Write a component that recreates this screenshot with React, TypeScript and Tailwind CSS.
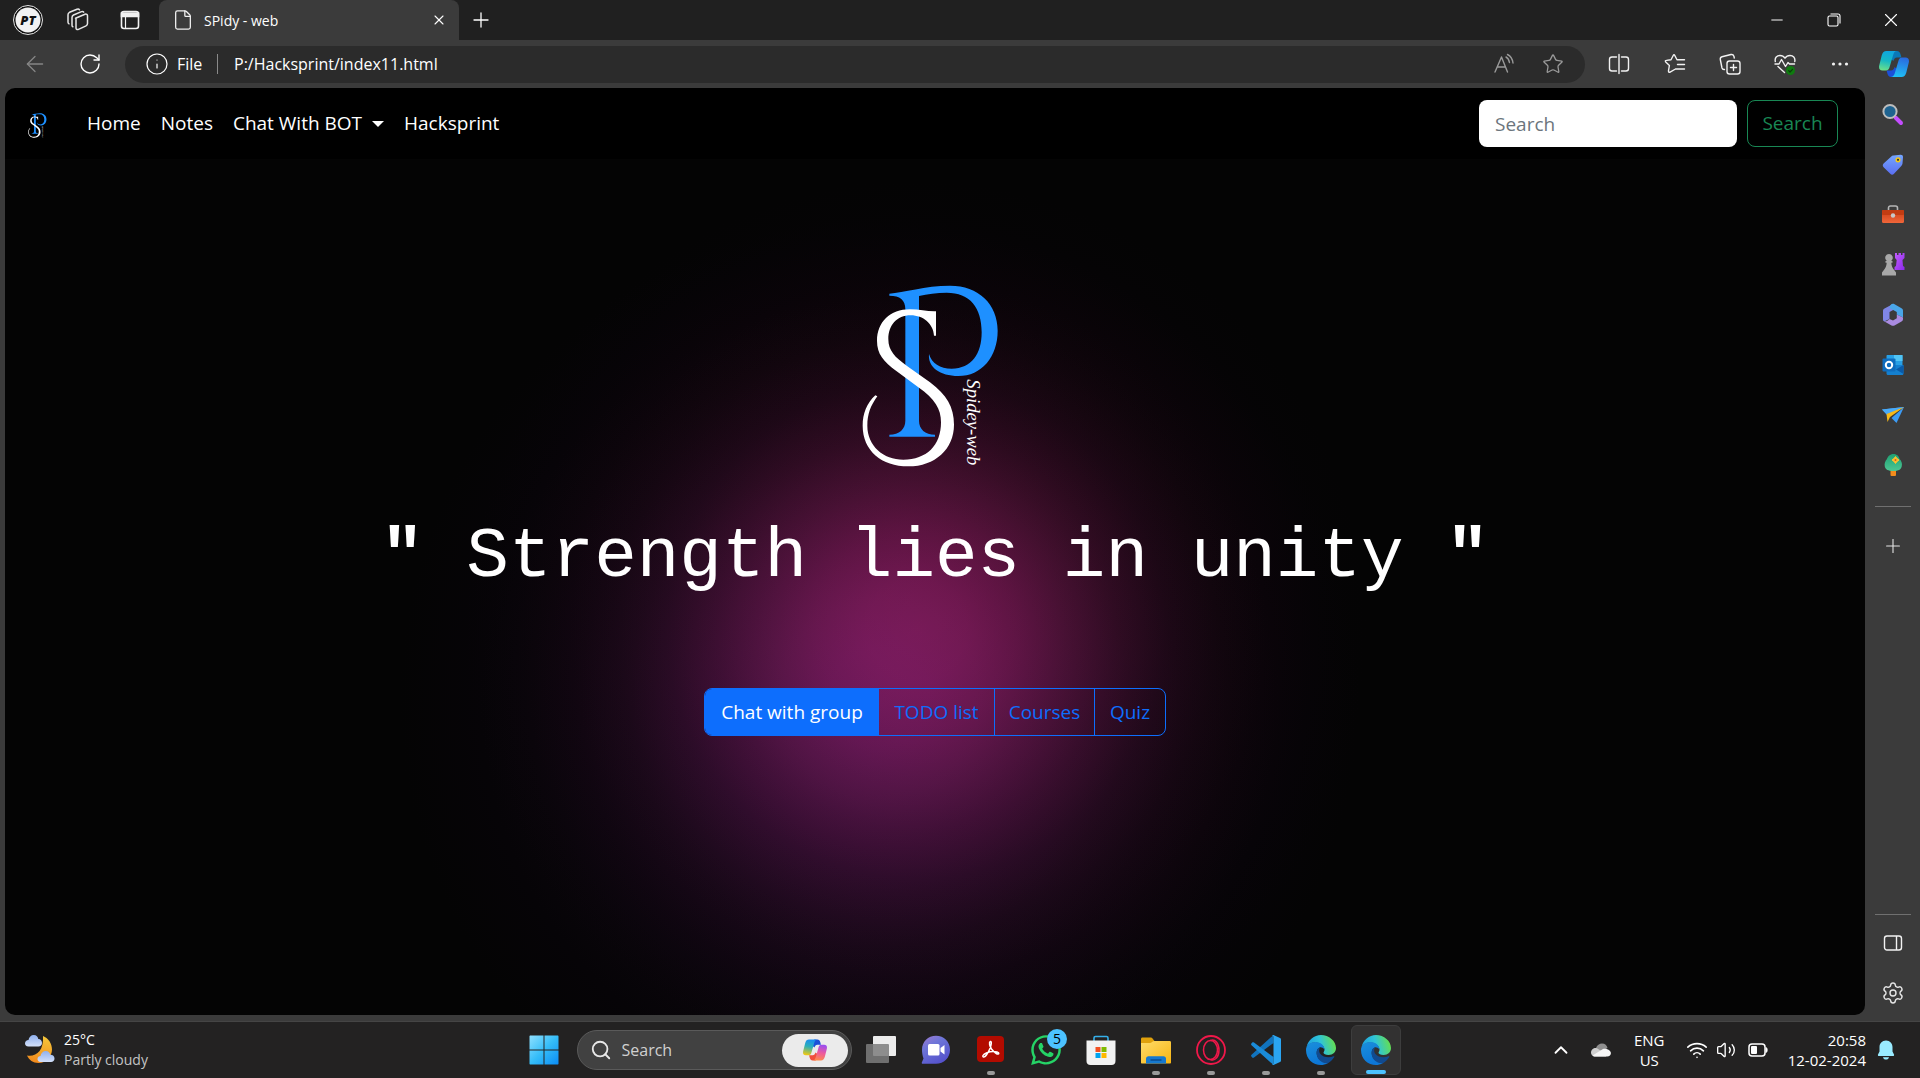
import React from "react";
import {
  ArrowLeft,
  ChevronUp,
  File,
  Info,
  Minus,
  Plus,
  RotateCw,
  Search,
  Settings,
  Star,
  Volume2,
  Wifi,
  X,
} from "lucide-react";
import { FaWhatsapp } from "react-icons/fa";

type IconButtonProps = { label: string; className: string; children: React.ReactNode };

function IconButton({ label, className, children }: IconButtonProps) {
  return (
    <button type="button" aria-label={label} className={`flex shrink-0 items-center justify-center ${className}`}>
      {children}
    </button>
  );
}

/* ---------- Logos and drawings ---------- */

function SpidyLogo({ className }: { className: string }) {
  return (
    <svg viewBox="60 40 450 555" className={className} role="img" aria-label="Spidey-web logo">
      <path
        fill="#1e90ff"
        d="M148 69C190 66 255 45 330 45C415 45 473 100 473 180C473 258 425 316 355 316C300 316 263 290 267 250C275 278 300 294 335 294C395 294 425 250 425 185C425 110 390 66 320 66C290 66 262 70 237 76L237 450C237 475 255 492 285 492L285 498L148 498L148 492C178 492 196 475 196 450L196 115C196 88 180 75 148 75Z"
      />
      <path
        fill="#fff"
        d="M288 122L288 195L282 195C280 160 250 134 212 134C170 134 145 165 145 205C145 240 165 260 200 285L270 335C320 372 342 410 342 462C342 535 285 587 205 587C125 587 68 540 68 465C68 430 80 398 106 374L112 377C92 405 82 430 82 465C82 525 130 567 190 567C260 567 303 525 303 455C303 415 285 385 235 350L170 302C130 272 111 250 111 210C111 155 150 116 210 116C240 116 262 123 288 122Z"
      />
      <text
        transform="translate(382 326) rotate(90)"
        fill="#fff"
        fontFamily="'Liberation Serif', serif"
        fontStyle="italic"
        fontSize="56"
      >
        Spidey-web
      </text>
    </svg>
  );
}

function SharedGradients() {
  return (
    <svg width="0" height="0" className="absolute" aria-hidden="true">
      <defs>
        <linearGradient id="edgeTop" x1="0" y1="0.6" x2="1" y2="0.4">
          <stop offset="0" stopColor="#1b9de2" />
          <stop offset="0.5" stopColor="#2fc4d8" />
          <stop offset="1" stopColor="#67e04a" />
        </linearGradient>
        <linearGradient id="edgeLeft" x1="0" y1="0" x2="0.4" y2="1">
          <stop offset="0" stopColor="#1a8fdc" />
          <stop offset="1" stopColor="#0d76d6" />
        </linearGradient>
        <linearGradient id="copLeft" x1="0.5" y1="0" x2="0.3" y2="1">
          <stop offset="0" stopColor="#0fa5e0" />
          <stop offset="0.5" stopColor="#16b8c4" />
          <stop offset="1" stopColor="#6be08a" />
        </linearGradient>
        <linearGradient id="copRight" x1="0.6" y1="0" x2="0.4" y2="1">
          <stop offset="0" stopColor="#2a6ae0" />
          <stop offset="1" stopColor="#1fc0f5" />
        </linearGradient>
        <linearGradient id="cop2Left" x1="0.5" y1="0" x2="0.3" y2="1">
          <stop offset="0" stopColor="#1a8cf0" />
          <stop offset="0.45" stopColor="#2bb0b8" />
          <stop offset="1" stopColor="#f2c811" />
        </linearGradient>
        <linearGradient id="cop2Right" x1="0.6" y1="0" x2="0.4" y2="1">
          <stop offset="0" stopColor="#9a4df0" />
          <stop offset="0.5" stopColor="#ec5a9e" />
          <stop offset="1" stopColor="#ff8a4a" />
        </linearGradient>
        <linearGradient id="winGrad" x1="0" y1="0" x2="1" y2="1">
          <stop offset="0" stopColor="#8fe0ff" />
          <stop offset="0.5" stopColor="#35bdf8" />
          <stop offset="1" stopColor="#0a8cf5" />
        </linearGradient>
        <linearGradient id="chatGrad" x1="0" y1="0" x2="0.6" y2="1">
          <stop offset="0" stopColor="#a07ad0" />
          <stop offset="0.4" stopColor="#6d75d8" />
          <stop offset="1" stopColor="#5552cc" />
        </linearGradient>
        <linearGradient id="folderGrad" x1="0" y1="0" x2="1" y2="1">
          <stop offset="0" stopColor="#ffdc6a" />
          <stop offset="1" stopColor="#f7b512" />
        </linearGradient>
        <linearGradient id="moonGrad" x1="0.6" y1="0" x2="0.4" y2="1">
          <stop offset="0" stopColor="#f5c63a" />
          <stop offset="1" stopColor="#f28a1c" />
        </linearGradient>
        <linearGradient id="cloudGrad" x1="0" y1="0" x2="0" y2="1">
          <stop offset="0" stopColor="#8fb0ee" />
          <stop offset="1" stopColor="#d3e0fa" />
        </linearGradient>
        <linearGradient id="tagGrad" x1="0" y1="0" x2="0" y2="1">
          <stop offset="0" stopColor="#74a6ff" />
          <stop offset="1" stopColor="#5b6ff2" />
        </linearGradient>
        <linearGradient id="rookGrad" x1="0" y1="0" x2="1" y2="1">
          <stop offset="0" stopColor="#c45cff" />
          <stop offset="1" stopColor="#8a2ae8" />
        </linearGradient>
        <linearGradient id="boxGrad" x1="0" y1="0" x2="0" y2="1">
          <stop offset="0" stopColor="#c93c12" />
          <stop offset="1" stopColor="#f0663a" />
        </linearGradient>
        <linearGradient id="treeGrad" x1="0" y1="0" x2="0" y2="1">
          <stop offset="0" stopColor="#1fa072" />
          <stop offset="1" stopColor="#4cc794" />
        </linearGradient>
      </defs>
    </svg>
  );
}

function Copilot({ warm, className }: { warm?: boolean; className: string }) {
  return (
    <svg viewBox="0 0 30 26" className={className} aria-hidden="true">
      <path fill={warm ? "#1b4fd8" : "#0a78b8"} d="M14 0H18C20 0 21 1.4 21.6 3.4L22.4 6.5H18C16 6.5 15 8 14.4 10L12 8Z" />
      <path fill={warm ? "#f0503c" : "#1b50d8"} d="M16 26H12C10 26 9 24.6 8.4 22.6L7.6 19.5H12C14 19.5 15 18 15.6 16L18 18Z" />
      <path fill={warm ? "url(#cop2Left)" : "url(#copLeft)"} d="M7.5 0H18C15.6 0 14.7 2 14 4.400L10.600 16C10 18.300 9 19.500 7 19.500H3.500C.6 19.500-.4 17.600.2 14.500L2.700 4.500C3.600 1.400 5 0 7.500 0Z" />
      <path fill={warm ? "url(#cop2Right)" : "url(#copRight)"} d="M22.500 26H12C14.400 26 15.300 24 16 21.600L19.400 10C20 7.700 21 6.500 23 6.500H26.500C29.400 6.500 30.400 8.400 29.800 11.500L27.300 21.500C26.400 24.600 25 26 22.500 26Z" />
    </svg>
  );
}

function EdgeLogo() {
  return (
    <svg viewBox="0 0 30 30" className="size-[30px]" aria-hidden="true">
      <path fill="url(#edgeTop)" d="M.6 12C2 5 8 0 15 0C23 0 30 6 30 13C30 17 27 20 22.500 20C19.500 20 17.500 19 17.500 17.800C17.500 17 18.500 16.500 18.500 14.500C18.500 11 14 7.500 9.500 7.500C5 7.500 2 9.500.6 12Z" />
      <path fill="url(#edgeLeft)" d="M0 15C0 10.500 4 7 9.500 7C14 7 18.500 10 18.500 14.500C17 12.500 15 12 13.500 12.500C10.500 14 10 18 11.500 21.500C13 25 17 28 22 28C19.500 29.500 17 30 15 30C7 30 0 24 0 15Z" />
      <path fill="#114a8f" d="M10.800 16C9.300 24 16 28.700 22 28.200C25 26.500 27 24 28.300 22C28.600 21.400 28 21 27.400 21.300C23.500 23.200 17 22.500 14 18.500C12.800 16.800 13 14 14 12.600C12 13 11.300 14.500 10.800 16Z" />
    </svg>
  );
}

/* ---------- Browser chrome ---------- */

function TabStrip() {
  return (
    <header className="flex h-10 shrink-0 items-stretch bg-[#202020] text-white">
      <div className="flex w-[159px] shrink-0 items-center pl-3">
        <IconButton label="Profile" className="size-8">
          <svg viewBox="0 0 32 32" className="size-8">
            <circle cx="16" cy="16" r="14.500" fill="#111" stroke="#e5e5e5" strokeWidth="1" />
            <circle cx="16" cy="16" r="12.500" fill="#f2f2f2" />
            <text x="16" y="20.500" textAnchor="middle" fontFamily="'Open Sans', sans-serif" fontSize="13" fontWeight="800" fontStyle="italic" fill="#111">PT</text>
          </svg>
        </IconButton>
        <IconButton label="Workspaces" className="ml-5 size-7">
          <svg viewBox="0 0 28 28" className="size-7" fill="none" stroke="#e6e6e6" strokeWidth="1.500" strokeLinejoin="round" strokeLinecap="round">
            <path d="M11.500 12.200L21 8.200C22.500 7.800 23.500 8.500 23.500 9.800V17.500C23.500 18.600 23 19.400 22 19.900L14.500 23.400C13 24 12 23.200 12 22V12.800" />
            <path d="M8.800 20.800C8.200 20.600 8 20 8 19.200V11.500C8 10.300 8.500 9.500 9.500 9L17.500 5.600C18.500 5.300 19.300 5.500 19.700 6.200" />
            <path d="M5 17.800C4.400 17.500 4 17 4 16.200V8.700C4 7.600 4.500 6.800 5.500 6.300L13 3.200C14 2.900 15 3 15.500 3.800" />
          </svg>
        </IconButton>
        <IconButton label="Tab actions" className="ml-6 size-7">
          <svg viewBox="0 0 28 28" className="size-7" fill="none" stroke="#f2f2f2" strokeWidth="1.600">
            <rect x="5.500" y="5.500" width="17" height="17" rx="2.500" />
            <path d="M5.500 7H22.500V10.500H5.500Z" fill="#f2f2f2" />
            <path d="M9.500 10.500V22.500" strokeWidth="1.200" />
          </svg>
        </IconButton>
      </div>
      <div className="flex w-[300px] shrink-0 items-center rounded-t-lg bg-[#3b3b3b] pl-[13px] pr-[6px]">
        <File className="size-[22px] text-[#f0f0f0]" strokeWidth={1.400} />
        <span className="ml-[10px] flex-1 text-[14px] text-white">SPidy - web</span>
        <IconButton label="Close tab" className="size-7">
          <X className="size-4" strokeWidth={1.600} />
        </IconButton>
      </div>
      <IconButton label="New tab" className="w-11">
        <Plus className="size-6" strokeWidth={1.300} />
      </IconButton>
      <div className="flex-1" />
      <IconButton label="Minimize" className="w-[57px]">
        <Minus className="size-[18px]" strokeWidth={1.300} />
      </IconButton>
      <IconButton label="Restore" className="w-[57px]">
        <svg viewBox="0 0 14 14" className="size-[14px]" fill="none" stroke="#fff" strokeWidth="1.100">
          <rect x="1" y="3" width="10" height="10" rx="1.500" />
          <path d="M3.500 1H11C12.300 1 13 1.700 13 3V10.500" />
        </svg>
      </IconButton>
      <IconButton label="Close" className="w-[58px]">
        <X className="size-[22px]" strokeWidth={1.200} />
      </IconButton>
    </header>
  );
}

function Toolbar() {
  return (
    <div className="flex h-12 shrink-0 items-center bg-[#3b3b3b] text-white">
      <IconButton label="Back" className="ml-5 w-[30px] text-[#858585]">
        <ArrowLeft className="size-[26px]" strokeWidth={1.200} />
      </IconButton>
      <IconButton label="Refresh" className="ml-[25px] w-[30px]">
        <RotateCw className="size-6" strokeWidth={1.400} />
      </IconButton>
      <div className="ml-5 flex h-[37px] flex-1 items-center rounded-full bg-[#2b2b2b] pl-5 pr-5">
        <Info className="size-6" strokeWidth={1.200} />
        <label htmlFor="address" className="ml-2 w-9 text-[16px]">
          File
        </label>
        <span className="ml-1 h-5 w-px bg-[#8a8a8a]" />
        <input
          id="address"
          defaultValue="P:/Hacksprint/index11.html"
          className="ml-4 min-w-0 flex-1 bg-transparent text-[16px] text-white outline-none"
        />
        <IconButton label="Read aloud" className="w-6">
          <svg viewBox="0 0 24 24" className="size-6" fill="none" stroke="#9a9a9a" strokeWidth="1.400" strokeLinecap="round" strokeLinejoin="round">
            <path d="M2 20L8.500 5L14.500 20M4.200 15H12.500" />
            <path d="M13 5C15 6 16 8 16.500 10.500M14.500 2.500C17.500 4 19.500 7 20 11" />
          </svg>
        </IconButton>
        <IconButton label="Favorite this page" className="ml-6 w-6">
          <Star className="size-[22px] text-[#9a9a9a]" strokeWidth={1.400} />
        </IconButton>
      </div>
      <IconButton label="Split screen" className="ml-[6px] w-14">
        <svg viewBox="0 0 24 24" className="size-6" fill="none" stroke="#f2f2f2" strokeWidth="1.400" strokeLinecap="round">
          <path d="M9.500 5H5C3.500 5 2.500 6 2.500 7.500V16.500C2.500 18 3.500 19 5 19H9.500M14.500 5H19C20.500 5 21.500 6 21.500 7.500V16.500C21.500 18 20.500 19 19 19H14.500M12 2.500V21.500" />
        </svg>
      </IconButton>
      <IconButton label="Favorites" className="w-14">
        <svg viewBox="0 0 24 24" className="size-6" fill="none" stroke="#f2f2f2" strokeWidth="1.400" strokeLinecap="round" strokeLinejoin="round">
          <path d="M12.500 17L7.500 19.800C6 20.700 5.300 20 5.500 18.600L6.400 13.500L2.700 9.900C2 9 2.300 8.500 3.400 8.400L8 7.700L10.200 3.500C10.700 2.500 11.300 2.500 11.800 3.500L14 7.700H21.500M14.500 12.500H21.500M12.500 17H21.500" />
        </svg>
      </IconButton>
      <IconButton label="Collections" className="w-[54px]">
        <svg viewBox="0 0 24 24" className="size-6" fill="none" stroke="#f2f2f2" strokeWidth="1.400" strokeLinecap="round" strokeLinejoin="round">
          <rect x="9" y="9" width="13" height="13" rx="2.500" />
          <path d="M15.500 12.500V18.500M12.500 15.500H18.500" />
          <path d="M6.500 17.500C5 17.700 4.300 17 4 16L2.300 7.500C2.100 6 2.700 5 4 4.700L13 2.500C14.500 2.200 15.500 3 15.900 4.200L16.300 6" />
        </svg>
      </IconButton>
      <IconButton label="Browser essentials" className="w-14">
        <svg viewBox="0 0 24 24" className="size-6" fill="none" stroke="#f2f2f2" strokeWidth="1.400" strokeLinecap="round" strokeLinejoin="round">
          <path d="M2.300 9.500C1.500 5.500 4 3.500 7 3.500C9.500 3.500 11 4.700 12 6.200C13 4.700 14.500 3.500 17 3.500C20 3.500 22.500 5.500 21.800 9.500M5 14.500L11.500 20.500" />
          <path d="M2 12H6L8.500 7.500L12.500 14.500L15 10.500L16.500 12H21.500" />
          <circle cx="17.500" cy="18.500" r="4.500" fill="#0f7b0f" stroke="none" />
          <path d="M15.700 18.700L17 20L19.500 17.300" stroke="#0a3d0a" strokeWidth="1.200" />
        </svg>
      </IconButton>
      <IconButton label="Settings and more" className="w-[54px]">
        <svg viewBox="0 0 18 6" className="h-[6px] w-[18px]" fill="#f2f2f2">
          <circle cx="2.500" cy="3" r="1.600" />
          <circle cx="9" cy="3" r="1.600" />
          <circle cx="15.500" cy="3" r="1.600" />
        </svg>
      </IconButton>
      <IconButton label="Copilot" className="w-[53px]">
        <Copilot className="h-[26px] w-[30px]" />
      </IconButton>
    </div>
  );
}

const sidebarApps: { label: string; icon: React.ReactNode }[] = [
  {
    label: "Search",
    icon: (
      <>
        <path d="M14.500 14.500L20 20" stroke="#c44dff" strokeWidth="4" strokeLinecap="round" />
        <circle cx="9" cy="8.500" r="6.600" fill="#1f6390" stroke="#bdbdbd" strokeWidth="2" />
      </>
    ),
  },
  {
    label: "Shopping",
    icon: (
      <>
        <path d="M12.500 2.500L19.500 1.700C21 1.600 22 2.400 22 4L21.500 10.500C21.400 11.500 21 12.200 20.300 13L13 20.700C11.800 22 10.500 22 9.300 20.800L2.600 14.200C1.500 13 1.500 11.800 2.600 10.600L10.300 3.500C11 2.900 11.500 2.600 12.500 2.500Z" fill="url(#tagGrad)" />
        <circle cx="17" cy="6.800" r="2.600" fill="#f2c81a" />
        <circle cx="17" cy="6.800" r="1.100" fill="#333" />
      </>
    ),
  },
  {
    label: "Tools",
    icon: (
      <>
        <path d="M7.500 7.500V5C7.500 3.700 8.200 3 9.500 3H14.500C15.800 3 16.500 3.700 16.500 5V7.500" fill="none" stroke="#b5b5b5" strokeWidth="1.600" />
        <rect x="1" y="7" width="22" height="13" rx="1.500" fill="url(#boxGrad)" />
        <rect x="1" y="7" width="22" height="5" rx="1" fill="#c23c12" />
        <circle cx="12" cy="12.500" r="2.200" fill="#c8c8c8" />
      </>
    ),
  },
  {
    label: "Games",
    icon: (
      <>
        <path d="M14 0H16V2H17.500V0H20V2H21.500V0H23.500V5L21.500 7L22 13L23.500 14V17H13.500V14L15 13L15.700 7L14 5Z" fill="url(#rookGrad)" />
        <path d="M8 1C10.300 1 11.800 2.800 11.800 4.800C11.800 6.200 11 7.300 10.200 8H11.500V9.700H10.300C10.500 13 11.500 15 13.500 17.500L15 19.500V22.500H1V19.500L2.500 17.500C4.500 15 5.500 13 5.700 9.700H4.500V8H5.800C5 7.300 4.200 6.200 4.200 4.800C4.200 2.800 5.700 1 8 1Z" fill="#a8a8a8" />
      </>
    ),
  },
  {
    label: "Microsoft 365",
    icon: (
      <>
        <path d="M12 1L3.500 5.500C2.400 6.100 2 6.800 2 8V16.500C2 17.500 2.400 18 3.200 18.500L8.500 16V9L14 6Z" fill="#7f86e6" />
        <path d="M12 .8C13 .8 13.500 1.200 14 1.500L20.500 5.200C21.600 5.900 22 6.600 22 7.800V14.500L15.800 11.500V9L8.500 5C9 2.500 10 .8 12 .8Z" fill="#4aa6e8" />
        <path d="M22 14.500V16C22 17.200 21.600 17.900 20.500 18.500L13.500 22.400C12.500 23 11.500 23 10.500 22.400L3 18.300C5 18.600 7 18 8.500 16L12 17.500L15.800 15.300V11.500Z" fill="#a98be0" />
      </>
    ),
  },
  {
    label: "Outlook",
    icon: (
      <>
        <path d="M5.500 3C5.500 2.400 5.900 2 6.500 2H20.500C21.100 2 21.500 2.400 21.500 3V12H5.500Z" fill="#28a0e6" />
        <path d="M13 2H21.500V8H13Z" fill="#50c4f5" />
        <path d="M5.500 12H22.500V20.500C22.500 21.300 22 22 21 22H7C6 22 5.500 21.300 5.500 20.500Z" fill="#1480d0" />
        <path d="M22.500 12V21L15 16.500Z" fill="#0a5aa8" />
        <rect x="1.500" y="5.500" width="13" height="13" rx="1" fill="#0f6cbd" />
        <circle cx="8" cy="12" r="3.200" fill="none" stroke="#fff" strokeWidth="2" />
      </>
    ),
  },
  {
    label: "Drop",
    icon: (
      <>
        <path d="M1 6.500L23 4L15.500 20L10.500 15L22 5L6 12Z" fill="#3d9cf5" />
        <path d="M1 6.500L23 4L5.500 11Z" fill="#49aaf8" />
        <path d="M5.500 11L23 4L9 14L6.500 19Z" fill="#f7b918" />
      </>
    ),
  },
  {
    label: "Tree",
    icon: (
      <>
        <rect x="9.500" y="17" width="5.500" height="6" rx="1" fill="#f28c1c" />
        <path d="M12.500 1C16 1 18 3.500 18.500 6C20.500 8 21.500 10.500 20.700 13.500C20 16.500 17.500 18 12.500 18C7 18 4.500 16.500 3.800 13.500C3.200 10.500 4.200 8 6 6C6.800 3.500 9 1 12.500 1Z" fill="url(#treeGrad)" />
        <path d="M14.500 3.500L16 5.500L18 7L16 8.500L14.500 10.500L13 8.500L11 7L13 5.500Z" fill="#ffc02e" stroke="#ffc02e" />
        <circle cx="14.500" cy="7" r="1" fill="#d9541e" />
      </>
    ),
  },
];

function Sidebar() {
  return (
    <aside className="flex w-[55px] shrink-0 flex-col items-center bg-[#3b3b3b] pt-[2px] text-[#e6e6e6]">
      {sidebarApps.map((app) => (
        <IconButton key={app.label} label={app.label} className="h-[50px] w-full">
          <svg viewBox="0 0 24 24" className="size-6">
            {app.icon}
          </svg>
        </IconButton>
      ))}
      <hr className="mt-4 w-9 border-[#707070]" />
      <IconButton label="Customize" className="mt-[14px] h-[50px] w-full">
        <Plus className="size-[22px]" strokeWidth={1.200} />
      </IconButton>
      <div className="flex-1" />
      <hr className="w-9 border-[#707070]" />
      <IconButton label="Hide sidebar" className="mt-[3px] h-[50px] w-full">
        <svg viewBox="0 0 20 18" className="h-[18px] w-5" fill="none" stroke="#f2f2f2" strokeWidth="1.400">
          <rect x="1.500" y="2" width="17" height="14" rx="2.500" />
          <path d="M13.500 2V16" />
        </svg>
      </IconButton>
      <IconButton label="Settings" className="mb-[3px] h-[50px] w-full">
        <Settings className="size-6" strokeWidth={1.400} />
      </IconButton>
    </aside>
  );
}

/* ---------- Web page ---------- */

function SiteNav() {
  return (
    <nav className="flex h-[71px] shrink-0 items-center bg-black pl-[22px] pr-[27px] text-[19px] text-white">
      <a href="#home" aria-label="SPidy" className="mt-1">
        <SpidyLogo className="h-[25px] w-[22px]" />
      </a>
      <ul className="ml-[38px] flex items-center gap-5">
        <li>
          <a href="#home">Home</a>
        </li>
        <li>
          <a href="#notes">Notes</a>
        </li>
        <li>
          <button type="button" className="flex items-center gap-[10px]">
            Chat With BOT
            <span className="border-x-[6px] border-t-[6px] border-x-transparent border-t-white" />
          </button>
        </li>
        <li>
          <a href="#hacksprint">Hacksprint</a>
        </li>
      </ul>
      <form className="ml-auto flex gap-[10px]" onSubmit={(event) => event.preventDefault()}>
        <input
          type="search"
          placeholder="Search"
          aria-label="Search"
          className="h-[47px] w-[258px] rounded-lg bg-white px-4 text-[19px] text-[#212529] placeholder:text-[#6c757d]"
        />
        <button type="submit" className="h-[47px] w-[91px] rounded-lg border border-[#198754] text-[19px] text-[#198754]">
          Search
        </button>
      </form>
    </nav>
  );
}

const actions = [
  { label: "TODO list", className: "w-[115px]" },
  { label: "Courses", className: "w-[100px]" },
  { label: "Quiz", className: "w-[71px]" },
];

function Hero() {
  return (
    <main className="flex flex-1 flex-col items-center bg-[#040404] bg-[radial-gradient(circle_at_49%_55%,rgb(86_12_40)_0px,rgb(81_11_38)_50px,rgb(67_9_31)_100px,rgb(48_7_22)_150px,rgb(31_4_14)_200px,rgb(17_2_8)_250px,rgb(9_1_4)_300px,rgb(4_0_2)_350px,rgb(1_0_1)_400px,rgb(0_0_0)_450px),radial-gradient(circle_at_47%_63%,rgb(54_13_62)_0px,rgb(51_12_59)_50px,rgb(44_11_50)_100px,rgb(34_8_39)_150px,rgb(24_6_28)_200px,rgb(15_4_18)_250px,rgb(9_2_11)_300px,rgb(5_1_6)_350px,rgb(2_0_3)_400px,rgb(0_0_0)_480px)] bg-blend-screen pt-[125px]">
      <SpidyLogo className="h-[185px] w-[150px]" />
      <h1 className="mt-12 whitespace-pre font-['Liberation_Mono',monospace] text-[71px] leading-[80px] text-white">
        <span className="font-bold">"</span> Strength lies in unity <span className="font-bold">"</span>
      </h1>
      <div role="group" aria-label="Sections" className="mt-[91px] flex h-12 overflow-hidden rounded-lg border border-[#0d6efd] text-[19px] text-[#0d6efd]">
        <button type="button" className="w-[174px] bg-[#0d6efd] text-white">
          Chat with group
        </button>
        {actions.map((action, index) => (
          <button
            key={action.label}
            type="button"
            className={`${action.className} ${index > 0 ? "border-l border-[#0d6efd]" : ""}`}
          >
            {action.label}
          </button>
        ))}
      </div>
    </main>
  );
}

/* ---------- Taskbar ---------- */

const taskbarApps: { label: string; icon: React.ReactNode; running?: boolean; active?: boolean; badge?: string }[] = [
  {
    label: "Task view",
    icon: (
      <svg viewBox="0 0 30 30" className="size-[30px]">
        <rect x="7" y="1" width="23" height="20" rx="1" fill="#ececec" />
        <rect x="0" y="9" width="23" height="19" rx="1" fill="#7d7d7d" fillOpacity="0.850" />
      </svg>
    ),
  },
  {
    label: "Chat",
    icon: (
      <svg viewBox="0 0 30 30" className="size-[30px]">
        <path d="M15 .8C23 .8 29 6.800 29 14.800C29 22.800 23 28.800 15 28.800H2C.7 28.800.4 28 1 27L2.500 23.500C1.500 21 1 18 1 14.800C1 6.800 7 .8 15 .8Z" fill="url(#chatGrad)" />
        <rect x="7" y="9" width="11.500" height="11.500" rx="1.500" fill="#fff" />
        <path d="M19.500 13L23.500 10V19.500L19.500 16.500Z" fill="#fff" />
      </svg>
    ),
  },
  {
    label: "Adobe Acrobat",
    running: true,
    icon: (
      <svg viewBox="0 0 30 30" className="size-[30px]">
        <rect x="1" y="1" width="27" height="26" rx="4" fill="#b30b00" />
        <path d="M7 20.500C8 18.500 13 16.500 17 16.500C20 16.500 23 17 22.800 18.500C22.500 20.300 18 17.500 15.500 14C13.500 11 12.800 7 14.300 6.500C16 6 15.300 10.500 13.800 14C12 18 9 22.500 7.500 22C6.800 21.700 6.700 21.200 7 20.500Z" fill="none" stroke="#fff" strokeWidth="1.500" />
      </svg>
    ),
  },
  { label: "WhatsApp", badge: "5", icon: <FaWhatsapp className="size-[34px] text-[#25d366]" /> },
  {
    label: "Microsoft Store",
    icon: (
      <svg viewBox="0 0 30 30" className="size-[30px]">
        <path d="M8 6V3C8 2 8.500 1.500 9.500 1.500H20.500C21.500 1.500 22 2 22 3V6" fill="none" stroke="#35b0ea" strokeWidth="1.600" />
        <path d="M.5 5.500H29.500V26C29.500 28.500 28 30 25.500 30H4.500C2 30 .5 28.500.5 26Z" fill="#f2f2f2" />
        <rect x="9.500" y="12" width="5" height="5" fill="#f25022" />
        <rect x="15.500" y="12" width="5" height="5" fill="#7fba00" />
        <rect x="9.500" y="18" width="5" height="5" fill="#00a4ef" />
        <rect x="15.500" y="18" width="5" height="5" fill="#ffb900" />
      </svg>
    ),
  },
  {
    label: "File Explorer",
    running: true,
    icon: (
      <svg viewBox="0 0 30 30" className="size-[30px]">
        <path d="M0 4C0 3 .6 2.500 1.500 2.500H9.500C10.500 2.500 11 3 11.500 3.500L13.500 6V12H0Z" fill="#e0a10c" />
        <path d="M0 8H9C10.500 8 11.500 6 13.500 6H28.500C29.500 6 30 6.500 30 7.500V27.500C30 28.300 29.500 28.500 29 28.500H1C.4 28.500 0 28.200 0 27.500Z" fill="url(#folderGrad)" />
        <path d="M5 28.500V24C5 22.300 6 21.300 7.500 21.300H22.500C24 21.300 25 22.300 25 24V28.500Z" fill="#1679cf" />
        <path d="M9.500 25H20.500" stroke="#0a4d90" strokeWidth="1.500" />
      </svg>
    ),
  },
  {
    label: "Opera GX",
    running: true,
    icon: (
      <svg viewBox="0 0 30 30" className="size-[30px]" fill="none" stroke="#f0184a">
        <circle cx="15" cy="15" r="14" strokeWidth="1.800" />
        <ellipse cx="14.500" cy="15" rx="7" ry="9.500" strokeWidth="1.500" />
        <path d="M14.500 5.500C19 3.500 23 8 23 15C23 22 19 26.500 14.500 24.500" strokeWidth="1.500" />
      </svg>
    ),
  },
  {
    label: "Visual Studio Code",
    running: true,
    icon: (
      <svg viewBox="0 0 30 30" className="size-[30px]">
        <path d="M22.500 0L22.500 8L3 22.500C2.300 23 1.700 23 1.200 22.500L.4 21.500C-.1 21 0 20.300.5 19.800Z" fill="#1173bd" />
        <path d="M22.500 30L22.500 22L3 7.500C2.300 7 1.700 7 1.200 7.500L.4 8.500C-.1 9 0 9.700.5 10.200Z" fill="#1a8bd8" />
        <path d="M22.500 0L29 3C29.700 3.300 30 3.800 30 4.500V25.500C30 26.200 29.700 26.700 29 27L22.500 30C21.800 30.200 21.200 30 20.800 29.500C21.800 29.800 22.500 29.300 22.500 28V2C22.500.7 21.800.2 20.800.5C21.200 0 21.800-.2 22.500 0Z" fill="#2aa5f2" />
      </svg>
    ),
  },
  { label: "Microsoft Edge", running: true, icon: <EdgeLogo /> },
  { label: "Microsoft Edge, SPidy - web", active: true, icon: <EdgeLogo /> },
];

function Taskbar() {
  return (
    <footer className="grid h-[57px] shrink-0 grid-cols-[1fr_auto_1fr] items-center border-t border-[#454545] bg-[#232222] text-[14px] leading-5 text-white">
      <button type="button" className="ml-6 flex items-center gap-2 justify-self-start text-left">
        <svg viewBox="0 0 32 32" className="size-8" aria-hidden="true">
          <path d="M19 2C24 4 28 9 28 15.500C28 22.500 22 29 14.500 29C9 29 5 26 3 21.500C12 23 20 17 19 2Z" fill="url(#moonGrad)" />
          <path d="M4.500 12.500C2 12.500 1 11 1 9.500C1 7.500 2.500 6 4.500 6C5 3 7 1 9.800 1C12.500 1 14 3 14.300 5C16.800 5 18 7 18 9C18 11 16.500 12.500 14.500 12.500Z" fill="url(#cloudGrad)" />
          <path d="M16.500 28C14.500 28 13.500 26.500 13.500 25C13.500 23.200 14.800 22 16.500 22C17 19 19 17 21.800 17C24.500 17 26 19 26.300 20.800C29 20.800 30.500 22.500 30.500 24.500C30.500 26.500 29 28 27 28Z" fill="url(#cloudGrad)" />
        </svg>
        <span className="flex flex-col">
          <span>25°C</span>
          <span className="text-[#c4c4c4]">Partly cloudy</span>
        </span>
      </button>

      <div className="flex items-center">
        <IconButton label="Start" className="h-[50px] w-[55px]">
          <svg viewBox="0 0 30 30" className="size-[30px]" fill="url(#winGrad)">
            <path d="M1.500.5H14.500V14.500H.5V1.500C.5.8.8.5 1.500.5ZM15.500.5H28.500C29.200.5 29.500.8 29.500 1.500V14.500H15.500ZM.5 15.500H14.500V29.500H1.500C.8 29.500.5 29.200.5 28.500ZM15.500 15.500H29.500V28.500C29.500 29.200 29.200 29.500 28.500 29.500H15.500Z" />
          </svg>
        </IconButton>
        <div className="ml-[5px] mr-[2px] flex h-10 w-[275px] items-center rounded-full border border-[#5a5a5a] bg-[#414141] pl-3 pr-[3px]">
          <Search className="size-[22px] shrink-0 text-[#e8e8e8]" strokeWidth={2} />
          <input
            type="text"
            aria-label="Search Windows"
            placeholder="Search"
            className="ml-[10px] min-w-0 flex-1 bg-transparent text-[16px] outline-none placeholder:text-[#d0d0d0]"
          />
          <IconButton label="Copilot search" className="h-[33px] w-[66px] rounded-full bg-[#ebebeb]">
            <Copilot warm className="h-[22px] w-6" />
          </IconButton>
        </div>
        {taskbarApps.map((app) => (
          <div key={app.label} className="flex w-[55px] justify-center">
            <button
              type="button"
              aria-label={app.label}
              className={`relative flex size-[50px] items-center justify-center rounded-md ${
                app.active ? "border border-[#3d3d3d] bg-[#323131]" : ""
              }`}
            >
              {app.icon}
              {app.badge && (
                <span className="absolute right-1 top-1 flex size-5 items-center justify-center rounded-full bg-[#4cc2ff] text-[14px] text-black">
                  {app.badge}
                </span>
              )}
              {app.running && <span className="absolute bottom-0 h-1 w-2 rounded-full bg-[#9a9a9a]" />}
              {app.active && <span className="absolute bottom-0 h-1 w-5 rounded-full bg-[#4cc2ff]" />}
            </button>
          </div>
        ))}
      </div>

      <div className="flex items-center justify-self-end pr-[25px] text-[15px]">
        <IconButton label="Show hidden icons" className="w-6">
          <ChevronUp className="size-[22px]" strokeWidth={2} />
        </IconButton>
        <IconButton label="OneDrive" className="ml-[18px] w-5">
          <svg viewBox="0 0 20 14" className="h-[14px] w-5">
            <path d="M5 5C6 2 8.500.5 11 .5C14 .5 16 2.500 16.500 5L10 9Z" fill="#8f8f8f" />
            <path d="M4 13.500C1.500 13.500 0 11.800 0 9.500C0 6.500 3 4.500 6 5.200L15 11V13.500Z" fill="#cfcfcf" />
            <path d="M4 13.500C3 13.500 2 13 1.500 12.500L12 6C14 5 19 6 20 9.800C20 12 18.500 13.500 16 13.500Z" fill="#f5f5f5" />
          </svg>
        </IconButton>
        <button type="button" className="ml-[22px] w-[33px] text-center">
          ENG
          <br />
          US
        </button>
        <button type="button" aria-label="Network, volume and battery" className="ml-5 flex items-center gap-2">
          <Wifi className="size-[22px]" strokeWidth={1.800} />
          <Volume2 className="size-5" strokeWidth={1.600} />
          <svg viewBox="0 0 20 14" className="ml-1 h-[14px] w-5" fill="none">
            <rect x="1" y="1" width="16" height="12" rx="3" stroke="#fff" strokeWidth="1.500" />
            <rect x="3" y="3" width="6" height="8" rx="1" fill="#fff" />
            <path d="M18 4.500C19.500 5 19.500 9 18 9.500Z" fill="#fff" stroke="#fff" />
          </svg>
        </button>
        <button type="button" className="ml-5 text-right">
          20:58
          <br />
          12-02-2024
        </button>
        <IconButton label="Notifications" className="ml-[11px] w-[18px]">
          <svg viewBox="0 0 18 20" className="h-5 w-[18px]" fill="#99ebff">
            <path d="M9 .5C13 .5 15.500 3.500 15.500 7V11.500L17 14.500C17.300 15.300 17 16 16 16H2C1 16 .7 15.300 1 14.500L2.500 11.500V7C2.500 3.500 5 .5 9 .5ZM6 17.200H12C11.700 18.700 10.500 19.500 9 19.500C7.500 19.500 6.300 18.700 6 17.200Z" />
          </svg>
        </IconButton>
      </div>
    </footer>
  );
}

export default function App() {
  return (
    <div className="flex min-h-screen flex-col bg-[#3b3b3b] font-['Open_Sans','Noto_Sans',sans-serif]">
      <SharedGradients />
      <TabStrip />
      <Toolbar />
      <div className="flex flex-1">
        <div className="mb-[6px] ml-[5px] flex min-w-0 flex-1 flex-col overflow-hidden rounded-[10px]">
          <SiteNav />
          <Hero />
        </div>
        <Sidebar />
      </div>
      <Taskbar />
    </div>
  );
}
